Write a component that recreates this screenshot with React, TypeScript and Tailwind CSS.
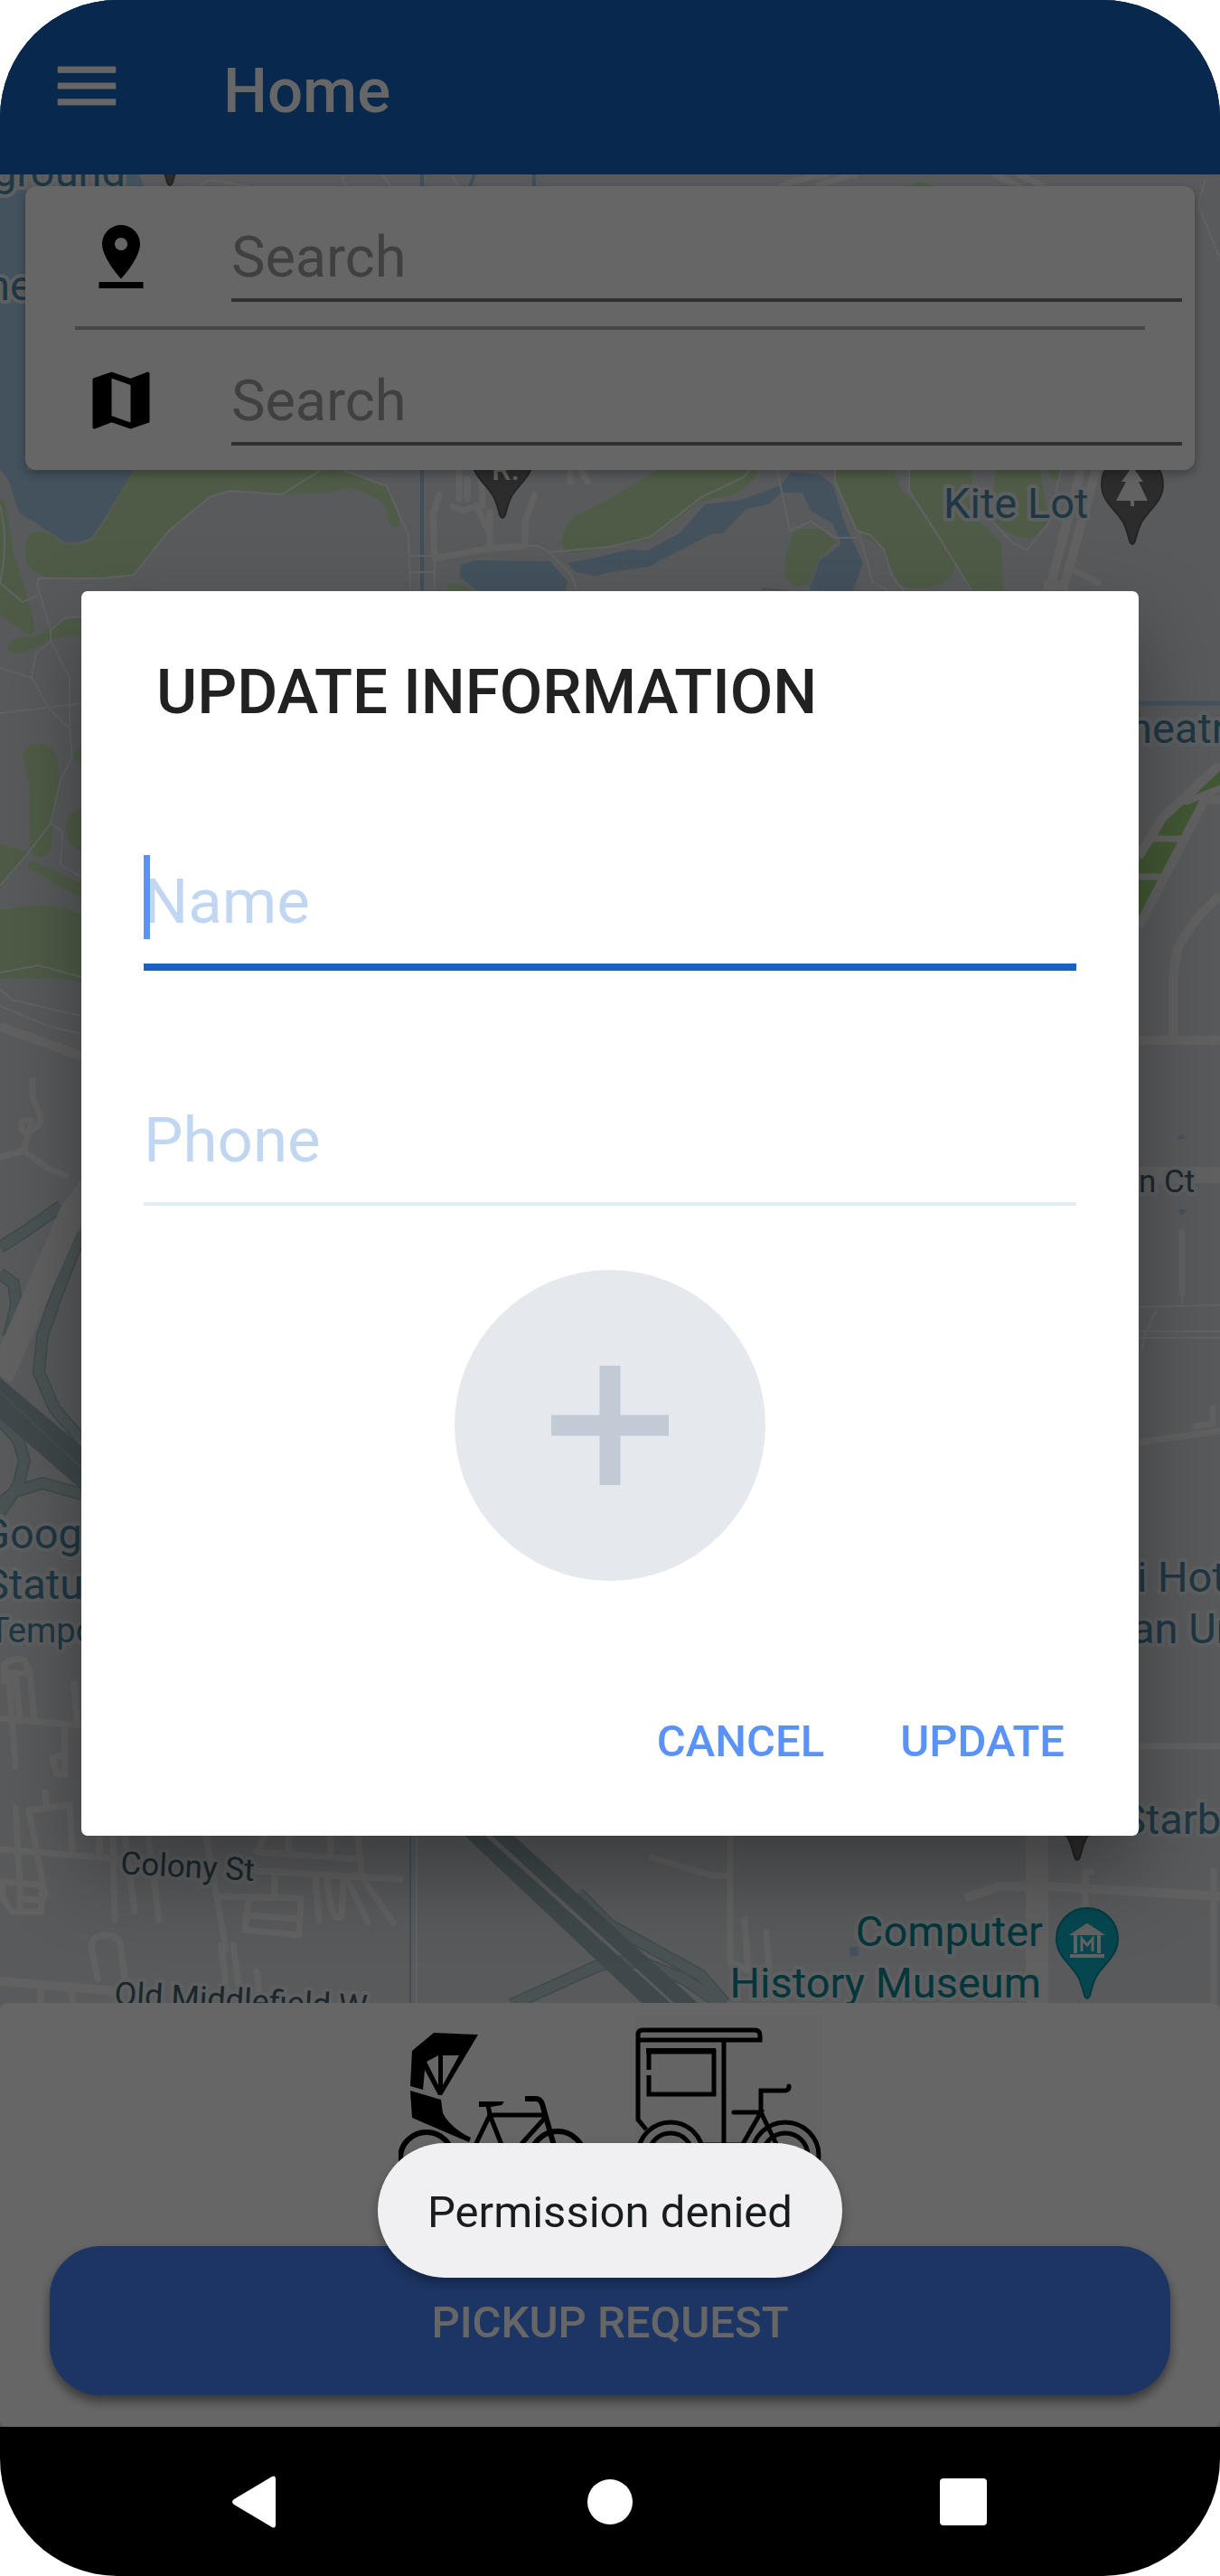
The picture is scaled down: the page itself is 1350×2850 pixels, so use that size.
import React from "react";

const parks = [
  "M148 520L379 520L428 538L443 578Q443 584 436 583Q430 582 429 574L426 560Q418 550 407 547Q395 538 380 541L366 545L312 547L254 543L232 550L187 587L148 636L112 640H65Q28 636 28 615V605Q28 588 46 588Q58 590 69 600Q88 606 103 596L118 573Z",
  "M0 550L6 557L15 610L30 660L39 695Q36 705 29 701L0 680Z",
  "M58 692Q72 682 90 682V702L56 707L30 720Q14 726 9 717Q9 708 20 706L43 703Z",
  "M26 840Q26 823 43 823Q60 823 63 838L67 873L59 906L56 940Q50 950 43 948Q33 945 33 935L33 870Z",
  "M90 825L80 836L90 846Z",
  "M0 934L33 943L0 982Z",
  "M34 952L90 977V994L30 959Z",
  "M90 895Q73 900 73 915Q73 934 90 943Z",
  "M0 1007Q60 995 90 1012V1088Q70 1080 52 1083H0Z",
  "M727 520L675 552L637 570Q622 583 622 603Q624 612 637 612L720 597L774 555L813 547Q830 540 839 520Z",
  "M869 617L877 590L890 585H908L925 600L907 618L895 647L882 649Q869 645 869 630Z",
  "M924 520H989L998 543L1011 553L1056 623Q1058 648 1019 651Q996 652 992 640L976 607L948 587L925 533Z",
  "M1006 520H1075L1080 573L1108 600L1110 653H1075L1041 597L1006 540Z",
  "M1101 520H1151L1161 577L1144 595H1131Q1108 590 1099 573Z",
  "M1161 520H1176L1170 531Q1161 532 1161 520Z",
  "M495 653V647L505 645L525 653Z",
  "M1005 206L1020 200L1033 206Z",
];

const lakes = [
  "M0 210H30V520H148L116 573L101 595Q80 604 69 598L21 567L9 530L0 520Z",
  "M138 193H154L159 206H138Z",
  "M628 623L654 618L697 608L716 609L752 590L780 558L821 553L864 537L875 522L907 525L922 537L935 580L955 623L944 653H895L907 620L931 602L922 580L897 565L888 545H864L851 558L826 563L800 590L787 591L731 620L718 627L675 633L659 637L637 633Z",
  "M510 625L525 620L609 621L628 643L626 653H527L508 638Z",
  "M843 650L875 653H843Z",
  "M1302 1260L1307 1255L1313 1260Z",
  "M1303 1338H1313L1308 1345Z",
  "M940 2155L949 2153L950 2163L941 2165Z",
];

const hairlines = [
  "M355 520L312 547L254 543L232 550L187 587L148 636L112 640H43L41 647L56 697V708L77 750V807L80 838L67 863L56 911L30 945L0 980",
  "M379 520L428 538L452 592L454 653M454 615H481M454 633H481M481 618V653",
  "M0 739L35 750L40 722L56 710M35 750L54 783L79 808M0 789L77 780L90 778M56 697L72 684L90 682",
  "M56 911L69 920L67 957L90 970M0 1076L43 1068L90 1081M0 1094L13 1106L90 1124M0 1113L56 1136L90 1144",
  "M0 560Q10 600 0 645L25 666L41 659",
  "M675 605L720 594L776 550L823 528L830 520M607 611L675 605M581 604H596L609 612L633 637L638 653",
  "M1006 520V543L1041 597L1075 653M924 520V533L948 587L963 592L978 608L987 637L1000 653M950 587L966 645L983 653",
  "M860 520L874 587L897 577L925 595H950M1099 578L1120 600L1136 609L1161 578L1174 520",
  "M1334 198L1326 227L1350 286M220 206L232 199L275 206M378 193L382 206M423 193L432 206M500 193L507 206",
  "M1260 1446L1350 1444M1260 1473H1350M1260 1480H1350M1280 1449L1267 1475L1264 1494M1308 1432V1445",
  "M461 2031V2216",
];

const streets = [
  "M486 547L479 570L481 618L538 607L581 604V577L592 547M542 567V607M508 520V552M517 530V552M533 520L534 560M501 560L512 565L527 560L538 583M631 520V533M643 520L650 533",
  "M1187 630L1215 645",
  "M36 1195V1215Q50 1240 42 1245Q28 1258 24 1248Q22 1238 34 1240M34 1246L26 1273L52 1292L73 1301M0 1280L26 1273",
  "M1270 928H1312M1260 970H1288M1313 887L1350 872",
  "M1308 1363V1430M1260 1596L1350 1583M1323 1578L1342 1575V1558M1260 1932H1350",
  "M5 1860V1842Q16 1832 27 1837L33 1851L38 1900M5 1851H30M10 1854L17 1954M17 1854L22 1900M0 1901L90 1909M82 1863L85 1906M72 1909V1963H63L58 1946L72 1940",
  "M17 2000L22 2081M50 1983L52 2000M32 2003L77 1997L80 2046M32 2003L50 2098M0 2046L138 2057M3 2081L47 2086L45 2115H13L3 2100ZM22 2084V2112M22 2100L44 2103",
  "M110 2050V2031M125 2031L127 2124M138 2031L149 2114M164 2031L176 2124M228 2031L250 2157M284 2070L443 2079M293 2031L284 2049L400 2057M319 2031V2049M366 2031V2053M396 2031L400 2076L435 2127M383 2076L407 2127M349 2076L353 2125M362 2076Q366 2130 378 2120L380 2078",
  "M304 2070V2098M241 2098L333 2100L331 2141L271 2135L275 2100M272 2119L332 2123M108 2190L101 2152Q104 2141 116 2141Q130 2141 133 2150L138 2190M245 2152L250 2200M258 2152L267 2216M284 2182L288 2216M45 2200V2216M80 2203V2216",
  "M721 2055L788 2075H808M808 2031V2170L828 2180M824 2124L828 2180M848 2138L851 2180M1201 2110V2071H1208M1343 2070V2216",
  "M865 206Q885 197 913 193M905 206Q925 197 947 193M1128 193L1154 206M1100 193L1128 206",
];

const roads = [
  "M1196 520L1161 653M1213 520L1176 653M1155 648H1182",
  "M0 1136L90 1168",
  "M1260 948L1287 904L1350 846M1260 1025L1333 885H1350",
  "M1350 990L1322 1019L1303 1048L1298 1083V1150M1260 1151H1350",
  "M1068 2100L1106 2087H1160L1350 2098",
  "M0 2192L129 2203",
];

const ramps = [
  "M68 1334L27 1363L0 1380M90 1363L63 1432L47 1478L43 1518L60 1558L90 1593M0 1409L15 1420L18 1443L10 1478M0 1570L20 1593L27 1616L20 1644L0 1673M0 1664L17 1650L47 1641L90 1653",
  "M640 2095L675 2130L775 2185L802 2216M566 2218L659 2176Q689 2165 718 2174L758 2190L798 2218",
];

type Label = { text: string; x: number; y: number; size: number; fill: string; end?: boolean; turn?: number };

const placeBlue = "#4f8aa8";
const streetInk = "#466270";
const museumTeal = "#088793";

const labels: Label[] = [
  { text: "ground", x: -8, y: 206, size: 47, fill: placeBlue },
  { text: "ne", x: -15, y: 332, size: 47, fill: placeBlue },
  { text: "Kite Lot", x: 1044, y: 573, size: 47, fill: placeBlue },
  { text: "heatre", x: 1249, y: 822, size: 47, fill: placeBlue },
  { text: "n Ct", x: 1260, y: 1319, size: 35, fill: streetInk },
  { text: "Google", x: -21, y: 1713, size: 47, fill: placeBlue },
  { text: "Statue", x: -18, y: 1769, size: 47, fill: placeBlue },
  { text: "Temporarily", x: -12, y: 1817, size: 38, fill: placeBlue },
  { text: "i Hotel", x: 1258, y: 1761, size: 47, fill: placeBlue },
  { text: "an Un", x: 1252, y: 1818, size: 47, fill: placeBlue },
  { text: "Starb", x: 1240, y: 2029, size: 47, fill: placeBlue },
  { text: "Computer", x: 1154, y: 2153, size: 47, fill: museumTeal, end: true },
  { text: "History Museum", x: 1152, y: 2210, size: 47, fill: museumTeal, end: true },
  { text: "Colony St", x: 133, y: 2073, size: 35, fill: streetInk, turn: 3 },
  { text: "Old Middlefield W", x: 126, y: 2218, size: 36, fill: streetInk, turn: 3 },
];

function MapPin({ x, y, fill, edge }: { x: number; y: number; fill: string; edge: string }) {
  return (
    <path
      transform={`translate(${x} ${y})`}
      d="M0 65C-4 65 -4 52 -10 41C-18 27 -34 18 -34 -1A34 34 0 0 1 34 -1C34 18 18 27 10 41C4 52 4 65 0 65Z"
      fill={fill}
      stroke={edge}
      strokeWidth="2"
    />
  );
}

function MapCanvas() {
  return (
    <svg
      viewBox="0 193 1350 2023"
      preserveAspectRatio="xMidYMid slice"
      className="absolute inset-0 h-full w-full"
      fontFamily="Roboto, sans-serif"
      role="img"
      aria-label="Map"
    >
      <rect y="193" width="1350" height="2023" fill="#dee1e5" />
      <g fill="#c3e6b1">{parks.map((d) => <path key={d} d={d} />)}</g>
      <g fill="#aacdeb">{lakes.map((d) => <path key={d} d={d} />)}</g>
      <path d="M467 193V653M525 193L520 206M591 193V206" stroke="#a3c5e0" strokeWidth="4" fill="none" />
      <path d="M454 2031V2216" stroke="#a3c5e0" strokeWidth="2" />
      <path d="M1260 778H1350" stroke="#aacdeb" strokeWidth="5" />
      <path d="M1260 955L1270 930L1287 898L1313 885H1333L1260 1016ZM1323 879L1350 853V869Z" fill="#a5dc80" />
      <path d="M1260 784V794H1264Z" fill="#a5dc80" />

      <g fill="none" stroke="#f3f4f5" strokeWidth="2">{hairlines.map((d) => <path key={d} d={d} />)}</g>
      <g fill="none" stroke="#a2b7bb" strokeWidth="14">{ramps.map((d) => <path key={d} d={d} />)}</g>
      <g fill="none" stroke="#bacfd3" strokeWidth="11">{ramps.map((d) => <path key={d} d={d} />)}</g>
      <g fill="none" stroke="#f3f3f3" strokeWidth="7" strokeLinecap="round" strokeLinejoin="round">
        {streets.map((d) => <path key={d} d={d} />)}
      </g>
      <g fill="none" stroke="#f3f3f3" strokeWidth="10" strokeLinejoin="round">
        {roads.map((d) => <path key={d} d={d} />)}
      </g>
      <path d="M68 1334L90 1306V1352L13 1530L0 1522V1490Z" fill="#f3f3f3" />
      <path d="M1135 2025H1160V2216H1135Z" fill="#f3f3f3" />
      <path d="M1260 1300H1350" stroke="#f3f3f3" strokeWidth="18" />
      <path d="M0 1524L90 1600V1648L0 1570Z" fill="#9fb3b9" />
      <path d="M0 1540L90 1624" stroke="#b5c4c8" strokeWidth="2" />
      <path d="M508 2025H530L742 2216H710ZM538 2025H562L772 2216H746Z" fill="#9fb3b9" />

      <MapPin x={188} y={140} fill="#6e6e6e" edge="#5a5a5a" />
      <MapPin x={556} y={508} fill="#6e6e6e" edge="#5a5a5a" />
      <text x="544" y="531" fontSize="34" fontWeight="500" fill="#f2f2f2">R.</text>
      <MapPin x={1253} y={537} fill="#6e6e6e" edge="#5a5a5a" />
      <path d="M1253 516L1265 533H1260L1270 554H1255V560H1251V554H1235L1246 533H1241Z" fill="#f4f4f4" />
      <MapPin x={1192} y={1993} fill="#6e6e6e" edge="#5a5a5a" />
      <MapPin x={1203} y={2146} fill="#0fb1c5" edge="#0b8e9f" />
      <g fill="none" stroke="#f4f4f4">
        <path d="M1186 2140L1203 2129L1220 2140Z" fill="#f4f4f4" strokeWidth="2" />
        <path d="M1190 2140V2161M1216 2140V2161M1184 2164H1222" strokeWidth="4" />
        <path d="M1197 2159V2145L1203 2152L1209 2145V2159" strokeWidth="3" />
      </g>

      {labels.map((l) => (
        <text
          key={l.text}
          x={l.x}
          y={l.y}
          fontSize={l.size}
          fill={l.fill}
          textAnchor={l.end ? "end" : "start"}
          transform={l.turn ? `rotate(${l.turn} ${l.x} ${l.y})` : undefined}
          stroke="#eceeef"
          strokeWidth="8"
          strokeLinejoin="round"
          paintOrder="stroke"
        >
          {l.text}
        </text>
      ))}
    </svg>
  );
}

function SearchRow({ label, icon }: { label: string; icon: string }) {
  return (
    <div className="flex items-center pt-8 pr-3.5 pb-[27px] pl-16">
      <svg viewBox="0 0 24 24" className="mb-1 size-[84px] shrink-0 fill-black" aria-hidden="true">
        <path d={icon} />
      </svg>
      <input
        type="text"
        aria-label={label}
        placeholder="Search"
        className="ml-20 h-24 min-w-0 flex-1 border-b-4 border-[#787878] bg-transparent text-[63px] text-[#222] outline-none placeholder:text-[#a0a0a0]"
      />
    </div>
  );
}

const pinDrop =
  "M18 8c0-3.31-2.69-6-6-6S6 4.69 6 8c0 4.5 6 11 6 11s6-6.5 6-11zm-8 0c0-1.1.9-2 2-2s2 .9 2 2-.89 2-2 2c-1.1 0-2-.9-2-2zM5 20v2h14v-2H5z";
const mapFold =
  "M20.5 3l-.16.03L15 5.1 9 3 3.36 4.9c-.21.07-.36.25-.36.48V20.5c0 .28.22.5.5.5l.16-.03L9 18.9l6 2.1 5.64-1.9c.21-.07.36-.25.36-.48V3.5c0-.28-.22-.5-.5-.5zM15 19l-6-2.11V5l6 2.11V19z";

function RickshawIcon() {
  return (
    <svg viewBox="0 0 206 206" className="size-full" aria-hidden="true">
      <path
        fillRule="evenodd"
        d="M39 19L88 21L48 88H44L29 60L27 82L13 78L15 39ZM31 51L44 77V44ZM49 44V77L67 44Z"
      />
      <path d="M13 83L47 93L49 108Q58 125 80 135L78 140L15 113Z" />
      <path d="M89 95H117L114 99L102 101H89Z" />
      <g fill="none" stroke="#000" strokeWidth="5">
        <circle cx="31" cy="158" r="29" strokeWidth="6" />
        <circle cx="176" cy="158" r="30" strokeWidth="6" />
        <path d="M99 98L101 110H164M101 110L78 158M136 142L163 112M101 110L120 158" />
        <path d="M140 92H152Q157 92 159 98L176 158" strokeWidth="6" />
      </g>
    </svg>
  );
}

function TricycleIcon() {
  return (
    <svg viewBox="0 0 206 206" className="size-full" fill="none" stroke="#000" strokeWidth="5" aria-hidden="true">
      <path d="M12 126L3 115V21Q3 16 8 16H132Q138 16 138 22V27H3M98 27V142" />
      <path d="M15 60V40H87V87H15V66" />
      <path d="M12 39H89" strokeWidth="6" />
      <path d="M170 78V80Q169 83 165 83H139V107M109 107H139L119 142M139 107L156 142" strokeLinecap="round" />
      <circle cx="39" cy="154" r="36" />
      <circle cx="39" cy="154" r="24" />
      <circle cx="166" cy="155" r="37" />
      <circle cx="166" cy="155" r="25" />
      <path d="M74 143H120" />
    </svg>
  );
}

const dialogField =
  "block w-full bg-transparent text-[69px] text-[#1565c0] outline-none placeholder:text-[#c1d6f0]";
const dialogAction = "h-[126px] px-7 text-[49px] font-medium text-[#5b92f9]";

export default function App() {
  return (
    <div className="bg-white font-['Roboto',sans-serif]">
      <div className="flex min-h-screen flex-col overflow-hidden rounded-[130px] bg-black">
        <div className="relative flex flex-1 flex-col">
          <header className="flex h-[193px] items-center bg-[#1565c0] pl-[53px] text-white">
            <button type="button" aria-label="Open menu" className="mb-1 size-[86px]">
              <svg viewBox="0 0 24 24" className="size-full fill-current" aria-hidden="true">
                <path d="M3 18h18v-2H3v2zm0-5h18v-2H3v2zm0-7v2h18V6H3z" />
              </svg>
            </button>
            <h1 className="pt-2 pl-[108px] text-[69px] font-medium">Home</h1>
          </header>

          <main className="flex flex-1 flex-col bg-[#dee1e5]">
            <section className="relative flex-1 px-7 pt-[13px]">
              <MapCanvas />
              <form className="relative rounded-[12px] bg-white shadow-[0_4px_12px_rgba(0,0,0,0.3)]">
                <SearchRow label="Pickup location" icon={pinDrop} />
                <hr className="mx-[55px] border-t-4 border-[#afafaf]" />
                <SearchRow label="Destination" icon={mapFold} />
              </form>
            </section>

            <section className="relative rounded-[8px] bg-white px-[55px] pt-3.5 pb-[35px]">
              <div className="flex justify-center gap-14">
                <button type="button" aria-label="Rickshaw" className="size-[206px]">
                  <RickshawIcon />
                </button>
                <button type="button" aria-label="Tricycle" className="size-[206px] bg-[#fafafa]">
                  <TricycleIcon />
                </button>
              </div>
              <button
                type="button"
                className="mt-[49px] h-[165px] w-full rounded-[56px] bg-[#4985fd] pt-1 text-[49px] font-medium text-white shadow-[0_7px_12px_rgba(0,0,0,0.45)]"
              >
                PICKUP REQUEST
              </button>
            </section>
          </main>

          <div className="absolute inset-0 flex items-center bg-black/60 px-[90px]">
            <div
              role="dialog"
              aria-modal="true"
              aria-labelledby="dialog-title"
              className="w-full rounded-[7px] bg-white pt-[70px] pb-[41px] shadow-[0_40px_90px_rgba(0,0,0,0.35)]"
            >
              <h2 id="dialog-title" className="pl-[83px] text-[69px] leading-[84px] font-medium text-[#212121]">
                UPDATE INFORMATION
              </h2>
              <form className="px-[69px] pt-[120px]">
                <div className="relative">
                  <input
                    type="text"
                    aria-label="Name"
                    placeholder="Name"
                    className={`${dialogField} h-[146px] border-b-8 border-[#1565c0]`}
                  />
                  <span className="absolute top-[18px] left-0 h-[93px] w-[7px] bg-[#5b92f9]" />
                </div>
                <input
                  type="tel"
                  aria-label="Phone"
                  placeholder="Phone"
                  className={`${dialogField} mt-[118px] h-[142px] border-b-4 border-[#e3edf8]`}
                />
                <button
                  type="button"
                  aria-label="Add photo"
                  className="mx-auto mt-[71px] block size-[344px] rounded-full bg-[#e5e8ed]"
                >
                  <svg viewBox="0 0 344 344" className="size-full" aria-hidden="true">
                    <path d="M172 106V238M107 172H237" stroke="#c1cad5" strokeWidth="23" />
                  </svg>
                </button>
              </form>
              <div className="flex justify-end gap-7 pt-[115px] pr-[54px]">
                <button type="button" className={dialogAction}>CANCEL</button>
                <button type="button" className={dialogAction}>UPDATE</button>
              </div>
            </div>
          </div>

          <div className="absolute inset-x-0 bottom-[165px] flex justify-center">
            <p
              role="status"
              className="flex h-[149px] items-center rounded-full bg-[#f0f0f2] px-[55px] pt-1 text-[49px] text-[#191c1d] shadow-[0_6px_12px_rgba(0,0,0,0.3)]"
            >
              Permission denied
            </p>
          </div>
        </div>

        <nav aria-label="System" className="flex h-[165px] items-center justify-around px-[84px]">
          <button type="button" aria-label="Back" className="size-[72px]">
            <svg viewBox="0 0 72 72" className="size-full fill-white" aria-hidden="true">
              <path d="M56 8Q60 6 60 11V61Q60 66 56 64L14 39Q10 36 14 33Z" />
            </svg>
          </button>
          <button type="button" aria-label="Home screen" className="size-[72px]">
            <svg viewBox="0 0 72 72" className="size-full fill-white" aria-hidden="true">
              <circle cx="36" cy="36" r="25" />
            </svg>
          </button>
          <button type="button" aria-label="Recent apps" className="size-[72px]">
            <svg viewBox="0 0 72 72" className="size-full fill-white" aria-hidden="true">
              <rect x="7" y="10" width="52" height="52" rx="4" />
            </svg>
          </button>
        </nav>
      </div>
    </div>
  );
}
